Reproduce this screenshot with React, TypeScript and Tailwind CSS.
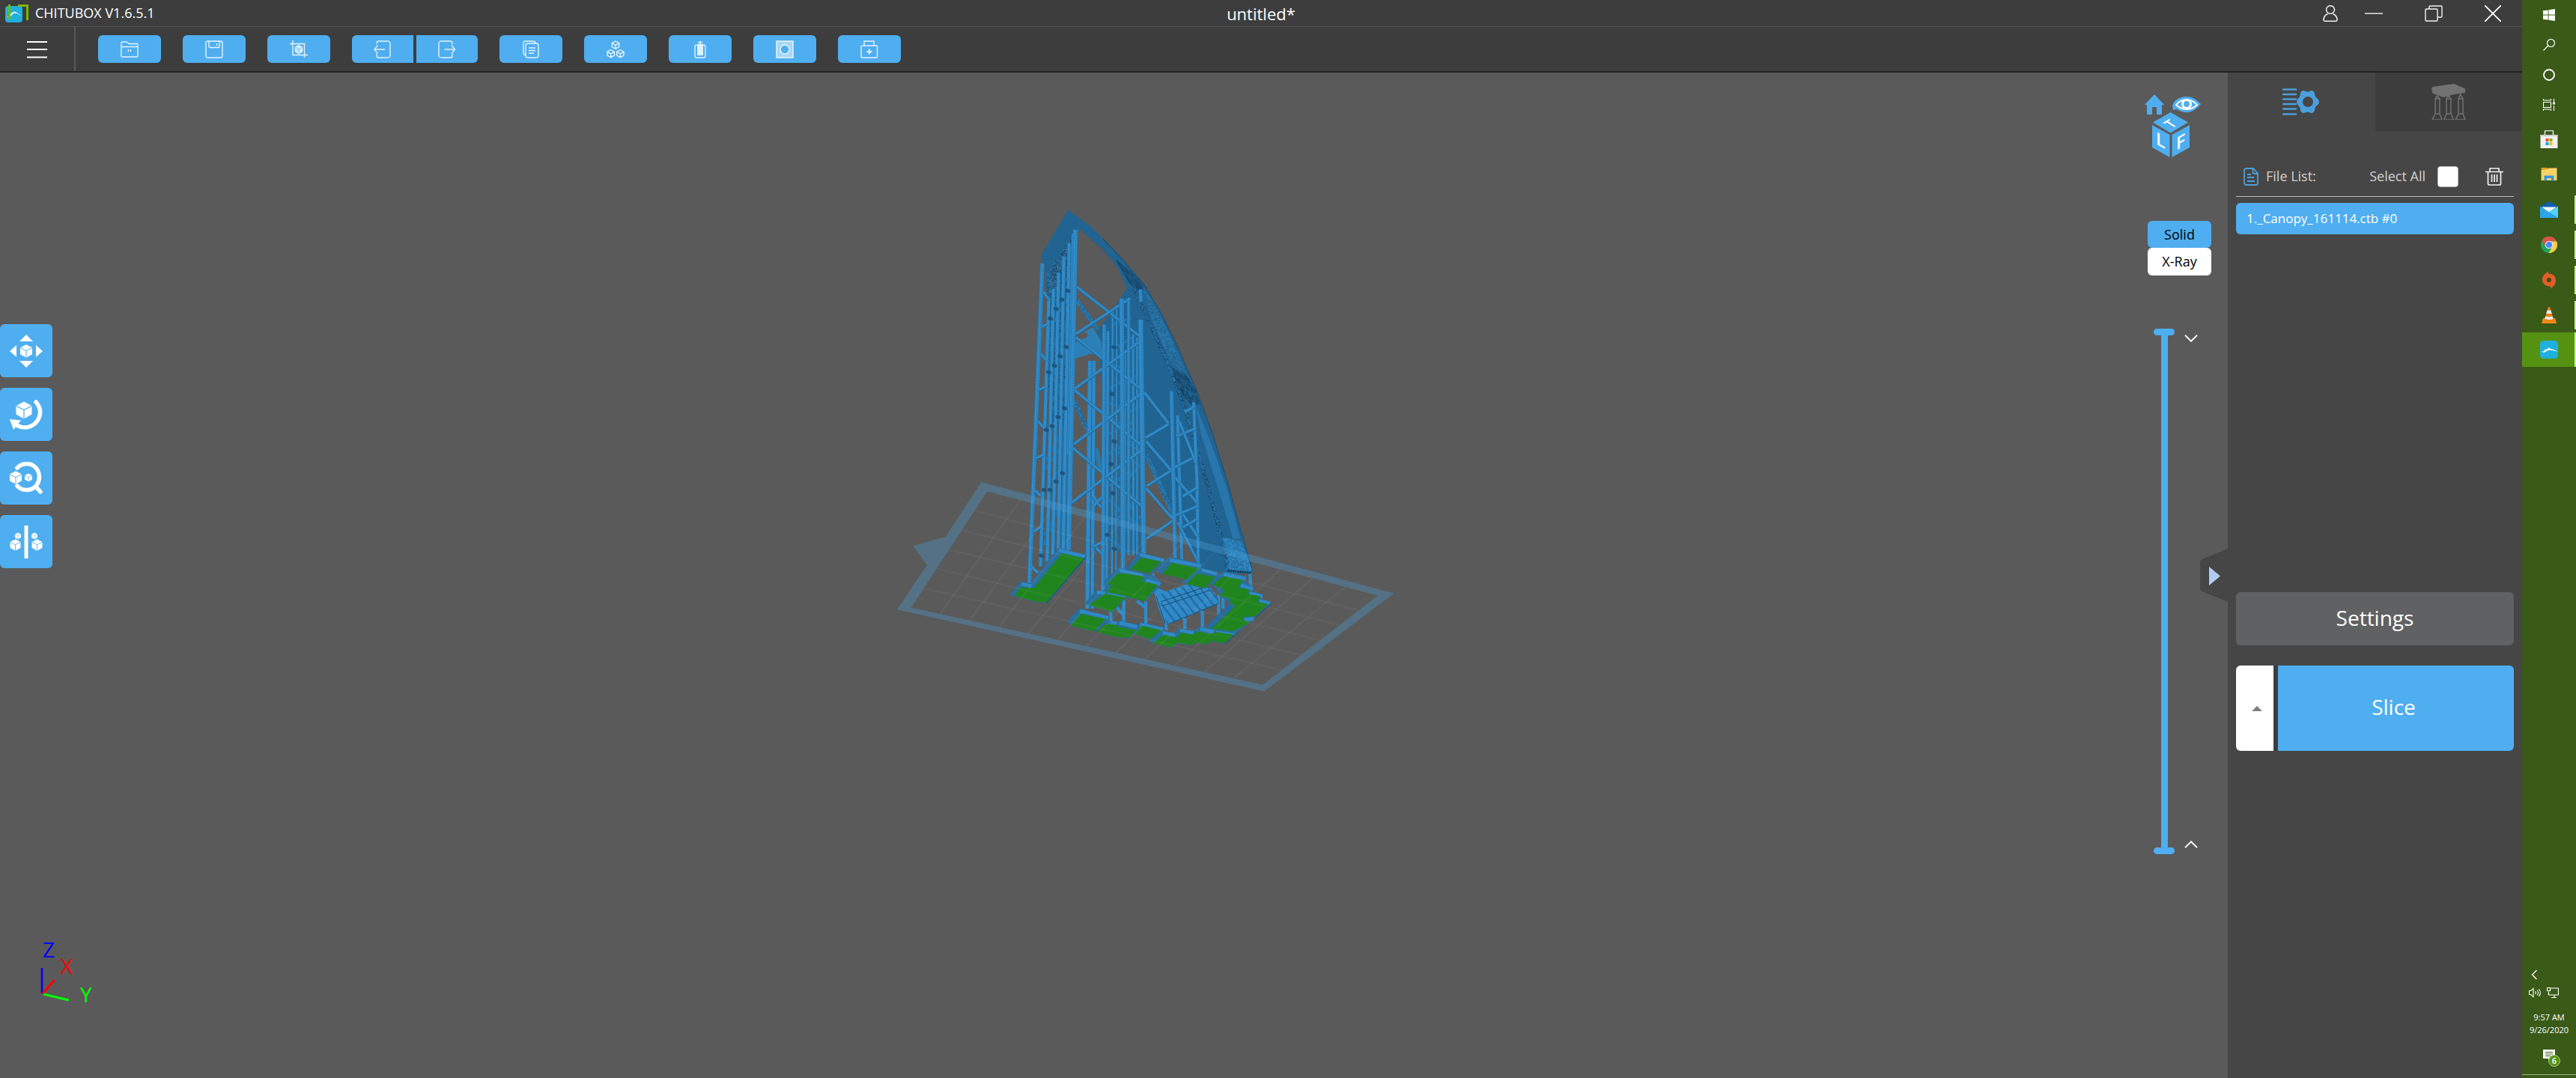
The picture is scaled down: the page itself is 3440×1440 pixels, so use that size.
import { FC, ReactNode } from "react";

/* ---------- toolbar icons ---------- */

const Line: FC<{ children: ReactNode }> = ({ children }) => (
  <svg className="w-6 h-6" viewBox="0 0 24 24" fill="none" stroke="#ffffff" strokeOpacity="0.85" strokeWidth="1.4">
    {children}
  </svg>
);

const FolderIcon = () => (
  <Line>
    <path d="M1 20.5V3.5c0-1 .6-1.5 1.5-1.5H8l3 2.5h10.5c1 0 1.5.6 1.5 1.5v14.5c0 1-.6 1.500-1.500 1.500h-19c-1 0-1.500-.6-1.500-1.500zM1 8.500h22M10.500 12v3M13.500 12v3" />
  </Line>
);
const SaveIcon = () => (
  <Line>
    <rect x="1" y="1" width="22" height="22" rx="2.5" />
    <path d="M5 1v7c0 1 .6 1.5 1.5 1.5h11c1 0 1.5-.6 1.5-1.5V1M15.5 4v3" />
  </Line>
);
const ScreenshotIcon = () => (
  <Line>
    <path d="M4 0v19.500h20M0 4.500h19.500V23" />
    <path d="M12 6.500l4.500 2.700v5.600L12 17.500l-4.500-2.700V9.200z" fill="#fff" fillOpacity="0.7" />
    <path d="M7.500 9.200L12 12l4.500-2.800M12 12v5" stroke="#4faeef" strokeWidth="0.7" />
  </Line>
);
const ImportIcon = () => (
  <Line>
    <path d="M4 5V3.500C4 2 5 1 6.500 1h12C20.500 1 22 2.500 22 4v16c0 1.500-1.500 3-3.500 3h-12C5 23 4 22 4 20.500V18M15 12H1M5.500 6.500L1 12l4.500 5.500" />
  </Line>
);
const ExportIcon = () => (
  <Line>
    <path d="M19 5V3.500C19 2 18 1 16.500 1h-12C2.500 1 1 2.500 1 4v16c0 1.500 1.500 3 3.500 3h12c1.500 0 2.500-1 2.500-2.500V18M8.500 12h14M18 6.500l4.500 5.500-4.500 5.500" />
  </Line>
);
const CopyIcon = () => (
  <Line>
    <rect x="5" y="4" width="17" height="19" rx="3" />
    <path d="M18 4c0-2-1-3-3-3H5C3 1 2 2 2 4v12c0 2 1 3.500 3 3.500M9 10h9M9 13.500h9M9 17h7" />
  </Line>
);
const Cube = ({ x, y }: { x: number; y: number }) => (
  <path
    transform={`translate(${x} ${y})`}
    d="M0-5l4.700 2.600v5L0 5.200l-4.700-2.600v-5zM-4.700-2.400L0 .4l4.700-2.800M0 .4v4.800"
  />
);
const ArrangeIcon = () => (
  <Line>
    <Cube x={12} y={6} />
    <Cube x={5.7} y={17.5} />
    <Cube x={18.3} y={17.5} />
  </Line>
);
const ResinIcon = () => (
  <Line>
    <path d="M12 5V1.500M9 3.500l3-2 3 2" />
    <rect x="5" y="6" width="14" height="17" rx="2.5" />
    <path d="M8 5.500h8V20H8z" fill="#fff" fillOpacity="0.8" stroke="none" />
  </Line>
);
const HollowIcon = () => (
  <Line>
    <path
      d="M1 1h22v22H1zM12 6a6 6 0 1 0 0 12 6 6 0 1 0 0-12z"
      fill="#fff"
      fillOpacity="0.5"
      fillRule="evenodd"
    />
  </Line>
);
const HoleIcon = () => (
  <Line>
    <path d="M5 6.500V1h13v5.500" />
    <rect x="1" y="7" width="21.5" height="16" rx="1.5" />
    <path d="M12 11.500v7M8.500 15h7" strokeWidth="2" />
  </Line>
);

const toolClass = "h-[37px] w-[84px] rounded-md bg-[#4faeef] flex items-center justify-center";

const tools = [
  { name: "Open", icon: <FolderIcon /> },
  { name: "Save", icon: <SaveIcon /> },
  { name: "Screenshot", icon: <ScreenshotIcon /> },
];
const moreTools = [
  { name: "Copy", icon: <CopyIcon /> },
  { name: "Auto layout", icon: <ArrangeIcon /> },
  { name: "Resin", icon: <ResinIcon /> },
  { name: "Hollow", icon: <HollowIcon /> },
  { name: "Dig hole", icon: <HoleIcon /> },
];

/* ---------- left hand tools ---------- */

const SolidCube = ({ x, y, r }: { x: number; y: number; r: number }) => (
  <g transform={`translate(${x} ${y}) scale(${r / 10})`}>
    <path d="M0-11l10 5.200v11L0 11l-10-5.800v-11z" fill="#fff" />
    <path d="M-10-5.500L0-.5l10-5M0-.5V11" stroke="#4faeef" strokeWidth="1.2" fill="none" />
  </g>
);

const sideTools = [
  {
    name: "Move",
    icon: (
      <>
        <SolidCube x={22} y={22} r={8} />
        <path d="M22 0l9 9H13zM22 44l9-9H13zM0 22l9-8v16zM44 22l-9-8v16z" fill="#fff" />
      </>
    ),
  },
  {
    name: "Rotate",
    icon: (
      <>
        <SolidCube x={19} y={16} r={10.5} />
        <path d="M35 5c5 6 7.500 13 4 21-3 8-11 13-19 13-4 0-8-1.500-11-3" fill="none" stroke="#fff" strokeWidth="5.5" strokeLinecap="round" />
        <path d="M0 28l15 1.500L5 42z" fill="#fff" />
      </>
    ),
  },
  {
    name: "Scale",
    icon: (
      <>
        <path d="M10 8C17 1 27 1 33 6c8 7 8 18 3 25-6 8-19 9-26 1M35 33l6 7" fill="none" stroke="#fff" strokeWidth="5.5" strokeLinecap="round" />
        <path d="M0 15h17v13H0z" fill="#4faeef" />
        <SolidCube x={8} y={21} r={8} />
        <SolidCube x={25} y={21} r={5} />
      </>
    ),
  },
  {
    name: "Mirror",
    icon: (
      <>
        <path d="M19.500 0h5v44h-5z" fill="#fff" />
        <SolidCube x={11} y={14} r={4} />
        <SolidCube x={33} y={14} r={4} />
        <SolidCube x={7.5} y={26} r={7} />
        <SolidCube x={36.5} y={26} r={7} />
      </>
    ),
  },
];

/* ---------- 3d scene ---------- */

// small seeded generator, keeps the surface grain stable between renders
const grain = (() => {
  let s = 7;
  const next = () => (s = (s * 16807) % 2147483647) / 2147483647;
  return Array.from({ length: 420 }, () => ({
    x: Math.floor(next() * 45) * 2,
    y: Math.floor(next() * 45) * 2,
  }));
})();

const lerp = (a: number[], b: number[], t: number) => [a[0] + (b[0] - a[0]) * t, a[1] + (b[1] - a[1]) * t];
const TL = [310, 914], TR = [1478, 1235], BR = [1134, 1510], BL = [82, 1272];
const gridLines = [
  ...Array.from({ length: 11 }, (_, i) => [lerp(TL, TR, (i + 1) / 12), lerp(BL, BR, (i + 1) / 12)]),
  ...Array.from({ length: 5 }, (_, i) => [lerp(TL, BL, (i + 1) / 6), lerp(TR, BR, (i + 1) / 6)]),
];

// x1, y1, x2, y2, width
const backPosts = [
  [618, 512, 610, 1275, 14], [630, 512, 625, 1275, 12],
  [672, 420, 668, 1200, 10], [686, 360, 684, 1170, 8], [698, 340, 696, 1160, 7],
  [747, 430, 748, 1110, 9], [759, 440, 759, 1110, 8], [724, 480, 723, 1110, 6],
  [495, 320, 470, 1145, 12], [509, 290, 490, 1130, 12], [524, 240, 507, 1110, 12],
  [540, 190, 523, 1100, 12], [556, 150, 538, 1095, 12], [566, 120, 552, 800, 8],
  [880, 680, 893, 1125, 11], [928, 640, 938, 880, 11], [938, 870, 942, 1140, 11],
];
const frontPosts = [
  [475, 212, 436, 1195, 13], [574, 108, 553, 1095, 15],
  [660, 400, 656, 1220, 12], [712, 320, 716, 1170, 14], [733, 325, 733, 1110, 10],
  [769, 385, 778, 1110, 15], [768, 292, 770, 330, 12], [861, 605, 872, 1120, 12],
];
const braces = [
  [578, 285, 770, 440], [575, 430, 738, 320], [575, 440, 775, 605], [570, 600, 770, 450],
  [568, 600, 778, 780], [568, 770, 775, 610], [565, 780, 778, 965], [562, 950, 775, 785],
  [780, 610, 852, 705], [783, 750, 852, 708], [785, 760, 860, 850], [787, 898, 858, 852],
  [785, 905, 865, 1000], [787, 1060, 865, 1005], [862, 845, 925, 812], [870, 870, 938, 950],
  [875, 745, 935, 720], [885, 700, 935, 830], [895, 930, 935, 905], [895, 985, 940, 1055],
  [870, 990, 940, 960], [880, 1010, 940, 1130], [900, 670, 928, 655], [895, 1025, 938, 1000],
  [478, 300, 495, 325], [473, 408, 492, 398], [468, 490, 488, 512], [462, 603, 485, 592],
  [456, 692, 485, 725], [450, 815, 478, 802], [447, 905, 470, 930], [444, 1040, 470, 1025],
  [438, 1140, 462, 1167], [628, 930, 650, 965], [628, 960, 655, 930], [628, 1080, 655, 1110],
  [628, 1085, 655, 1070],
];
const webs = [
  [505, 400, 560, 300], [500, 480, 560, 380], [505, 560, 560, 430], [500, 640, 560, 560],
  [500, 720, 560, 640], [480, 850, 555, 740], [480, 1080, 550, 880], [490, 900, 550, 810],
  [480, 1050, 520, 980], [485, 820, 550, 700],
  [670, 600, 740, 560], [665, 640, 730, 660], [670, 740, 745, 700], [670, 800, 740, 760],
  [670, 900, 740, 850], [670, 860, 740, 900], [675, 940, 750, 1010], [670, 1020, 745, 960],
  [675, 1060, 730, 1100], [690, 400, 740, 380], [680, 480, 745, 440], [680, 520, 740, 545],
  [725, 580, 765, 550], [725, 880, 770, 830], [725, 1040, 770, 990], [680, 690, 750, 730],
  [680, 780, 760, 830], [690, 980, 765, 940], [720, 680, 770, 650], [720, 760, 770, 790],
];
const joints = [
  [551, 296], [533, 323], [516, 352], [499, 382], [546, 469], [528, 498], [511, 527], [494, 547],
  [541, 658], [522, 685], [504, 713], [487, 725], [535, 858], [516, 884], [498, 910], [480, 910],
  [472, 1112], [690, 470], [683, 614], [690, 760], [680, 830], [686, 920], [670, 1048], [690, 1090],
];

const rims = [
  "25,285 70,230 110,238 220,95 335,125 330,138 175,318 120,310 45,290",
  "490,180 545,112 652,140 640,155 595,197 545,190",
  "610,190 665,132 797,160 795,178 860,195 865,210 808,258 733,240 705,230 735,222 635,200",
  "405,275 405,225 460,175 600,205 635,240 570,310 480,292",
  "325,320 372,265 415,275 495,292 438,354 342,325",
  "257,390 303,338 425,370 420,385 370,432 270,408",
  "375,432 418,385 458,395 462,385 540,405 530,430 502,459 440,452",
  "522,440 545,393 645,415 635,430 590,464",
  "580,468 635,427 685,437 705,417 765,428 785,410 850,425 945,430 925,445 887,480 830,470 815,484 768,476 747,487 697,478 672,497 600,477",
  "830,240 880,190 975,210 970,232 1005,255 1000,270 1043,285 1032,302 1075,318 1012,372 1005,378 985,397 930,437 830,422 812,410 905,322 900,310 865,288 855,262",
];
const greens = [
  "45,288 68,253 120,258 235,118 325,138 170,316 120,308",
  "508,180 552,135 632,150 585,197",
  "635,200 675,155 782,178 735,222",
  "733,240 775,198 850,213 805,257",
  "415,272 432,245 415,240 455,200 480,197 565,210 553,228 617,243 565,308 480,288",
  "342,325 410,277 490,293 435,352",
  "270,405 310,360 408,380 365,430 288,412",
  "375,432 410,400 458,405 455,412 530,425 502,457 440,451",
  "525,440 555,407 632,425 590,462",
  "600,477 640,443 692,455 712,435 757,443 780,430 835,442 850,430 925,440 885,478 830,468 815,483 768,475 747,485 697,475 670,495",
  "837,242 880,210 960,225 940,255 985,262 980,280 1030,290 1018,312 1060,320 1010,370 965,372 960,382 985,397 920,430 832,420 927,330 905,310 910,300 865,288 885,265",
];

const Model = () => (
  <svg
    className="absolute left-[1180px] top-[163px] w-[700px] h-[680px]"
    viewBox="0 0 1568 1568"
    preserveAspectRatio="none"
    aria-label="Model on build plate"
  >
    <defs>
      <pattern id="grain" width="90" height="90" patternUnits="userSpaceOnUse">
        {grain.map((g, i) => (
          <rect key={i} x={g.x} y={g.y} width="2.5" height="2.5" fill="#123a57" />
        ))}
      </pattern>
      <pattern id="hatch" width="6" height="6" patternUnits="userSpaceOnUse" patternTransform="rotate(25)">
        <path d="M0 3h6" stroke="#1d5a85" strokeWidth="1.5" />
      </pattern>
      <pattern id="wave" width="27" height="40" patternUnits="userSpaceOnUse" patternTransform="rotate(-38)">
        <path d="M4 0v40" stroke="#226a9c" strokeWidth="7" />
      </pattern>
    </defs>

    {/* canopy shell */}
    <g>
      <path
        d="M552 47L620 98 700 182 778 275 830 365 880 470 935 600 985 740 1030 890 1070 1040 1104 1160 1098 1168 1015 1165 948 1150 865 975 785 800 780 700 655 620 640 420 690 350 728 287 700 225 660 170 588 107 575 112 500 235 495 310 485 290 484 215 475 212 472 185z"
        fill="#226796"
      />
      <path
        d="M552 47L620 98 700 182 778 275 830 365 880 470 935 600 985 740 1030 890 1070 1040 1104 1160 1015 1165 948 1150 785 800 780 700 655 620 640 420 728 287 700 225 588 107 500 235 485 290 472 185z"
        fill="url(#hatch)"
      />
      <path d="M655 620h125v170l-10 310H665z" fill="#226796" fillOpacity="0.65" />
      <path d="M776 292L800 320 850 420 905 548 880 545 850 500 800 380z" fill="#2876ab" />
      <path d="M932 645L985 780 1025 900 1068 1060 1045 1060 1008 930 950 740z" fill="#2876ab" />
      <path d="M1012 1055L1072 1068 1104 1160 1030 1158z" fill="#2d86c2" />
      <path d="M690 195L735 232 778 275 772 295 745 285 728 262z" fill="#1d5a85" />
      <path d="M855 528L905 555 935 605 945 640 925 650 895 620z" fill="#1f608d" />
      <g fill="url(#grain)">
        <path d="M690 195L735 232 778 275 772 295 745 285 728 262z" />
        <path d="M690 195L735 232 778 275 772 295 745 285 728 262z" transform="translate(3 5)" />
        <path d="M855 528L905 555 935 605 945 640 925 650 895 620z" />
        <path d="M855 528L905 555 935 605 945 640 925 650 895 620z" transform="translate(3 4)" />
        <path d="M1012 1055L1072 1068 1104 1160 1030 1158z" fillOpacity="0.5" />
        <path d="M776 292L800 320 850 420 905 548 880 545 850 500 800 380z" fillOpacity="0.5" />
      </g>
      <g fill="none">
        <path d="M748 290L785 370 850 520 890 625 925 740 965 880 1012 1060 1030 1155" stroke="#276fa3" strokeWidth="8" />
        <path d="M748 290L785 370 850 520 890 625 925 740 965 880 1012 1060 1030 1155" stroke="url(#grain)" strokeWidth="12" />
        <path d="M655 135L700 184 778 275 830 365 880 470 935 600 985 740 1030 890 1070 1040 1104 1160" stroke="#16486b" strokeWidth="3" strokeDasharray="4 3" />
        <path d="M1030 1158L1100 1165" stroke="#133d5a" strokeWidth="7" strokeDasharray="5 2" />
      </g>
    </g>

    {/* inner pieces behind the supports */}
    <g>
      <path d="M572 505V455L608 440 612 428 600 425 625 408 650 450 657 500 620 490z" fill="#2c80b8" />
      <path d="M578 325L640 415M570 635L614 735M785 800L868 990M635 782L650 850" stroke="#2a7ab0" strokeWidth="14" fill="none" />
      <path d="M578 325L640 415M570 635L614 735M785 800L868 990" stroke="url(#grain)" strokeWidth="14" strokeOpacity="0.6" fill="none" />
      <path d="M488 240L572 118V550L550 1090 530 1090 530 720 500 720 490 560z" fill="#2876ab" fillOpacity="0.8" />
      <path d="M488 240L572 118V450L548 720 500 720 490 560z" fill="url(#grain)" />
    </g>

    <g fill="none">
      {webs.map(([a, b, c, d], i) => (
        <path key={i} d={`M${a} ${b}L${c} ${d}`} stroke="#2877ac" strokeWidth="8" />
      ))}
      {backPosts.map(([a, b, c, d, w], i) => (
        <g key={i}>
          <path d={`M${a} ${b}L${c} ${d}`} stroke="#246a99" strokeWidth={w} />
          <path d={`M${a - 1} ${b}L${c - 1} ${d}`} stroke="#2f8ac8" strokeWidth={w - 3} />
        </g>
      ))}
      {braces.map(([a, b, c, d], i) => (
        <g key={i}>
          <path d={`M${a} ${b}L${c} ${d}`} stroke="#22658f" strokeWidth="10" />
          <path d={`M${a} ${b - 1}L${c} ${d - 1}`} stroke="#2f8ac8" strokeWidth="7" />
        </g>
      ))}
      {frontPosts.map(([a, b, c, d, w], i) => (
        <g key={i}>
          <path d={`M${a} ${b}L${c} ${d}`} stroke="#2877ac" strokeWidth={w} />
          <path d={`M${a} ${b}L${c} ${d}`} stroke="#2f8ccb" strokeWidth={w - 4} />
          <path d={`M${a + 2} ${b}L${c + 2} ${d}`} stroke="#22658f" strokeWidth="2" strokeDasharray="3 5" />
        </g>
      ))}
      {joints.map(([x, y], i) => (
        <ellipse key={i} cx={x} cy={y} rx="8" ry="6" fill="#1d567d" transform={`rotate(20 ${x} ${y})`} />
      ))}
    </g>

    {/* rafts */}
    <g transform="translate(358.4 1014.6) scale(.7467 .7687)">
      <g stroke="#2f8ac8" strokeWidth="13" fill="none">
        <path d="M570 310V400M535 308L568 335M482 305V392M455 335L480 365M430 350V388M715 375L727 385V420M788 345L797 355V415M862 285V362M880 295V340M988 200L990 250M652 395V425" />
      </g>
      <path d="M600 195l20 40h-45z" fill="#2f8ac8" />
      <path d="M600 262L615 255 650 270 740 240 770 250 830 255 860 300 862 318 655 403 645 400 622 340z" fill="#2f8ac8" />
      <path d="M635 275L740 240 830 255 860 300 862 318 655 403 630 330z" fill="url(#wave)" />
      <path d="M630 312L800 255M636 328L825 266M655 403L862 318M612 290L648 400" stroke="#1a5178" strokeWidth="3" fill="none" />
      {rims.map((p, i) => (
        <polygon key={i} points={p} fill="#286f9f" />
      ))}
      <g stroke="#2f89c5" strokeWidth="14" fill="none">
        <path d="M72 240L112 248M222 106L328 130M548 124L642 146M668 144L790 168M795 184L855 200M465 186L560 206M570 226L628 240M375 272L408 278M306 349L420 376M430 394L455 399M465 396L535 412M548 402L640 422M638 436L688 446M708 426L762 436M788 420L842 432M882 201L970 218M950 245L1000 260M985 277L1038 290M1025 307L1068 318M962 384L1002 380" />
      </g>
      {greens.map((p, i) => (
        <polygon key={i} points={p} fill="#21851f" />
      ))}
      <path d="M415 278L490 292M850 430L935 442" stroke="#2f89c5" strokeWidth="5" />
      <path d="M812 410L905 322 927 330 832 420z" fill="#266c9c" />
      <path d="M330 132L172 318M1072 318L1012 372M940 432L887 480" stroke="#1a5178" strokeWidth="3" />
    </g>

    {/* build plate, seen from below through the model */}
    <g fill="none" stroke="#ffffff" strokeOpacity="0.04" strokeWidth="6">
      {gridLines.map(([a, b], i) => (
        <path key={i} d={`M${a[0]} ${a[1]}L${b[0]} ${b[1]}`} />
      ))}
    </g>
    <path
      d="M292 885L1527 1228 1138 1530 40 1278 130 1140 88 1082 186 1053zM310 914L82 1272 1134 1510 1478 1235z"
      fill="#4a9fd6"
      fillOpacity="0.35"
      fillRule="evenodd"
    />
  </svg>
);

const Axes = () => (
  <svg className="absolute left-[50px] top-[1150px] w-[80px] h-[100px]" viewBox="0 0 80 100" aria-label="Axes">
    <path d="M6 80V46" stroke="#0000ff" strokeWidth="2.5" />
    <path d="M8 81l34 8" stroke="#00ff00" strokeWidth="3" />
    <path d="M7 80l16-18" stroke="#ff0000" strokeWidth="3" />
    <g fontFamily="Open Sans" fontSize="28">
      <text x="7" y="32" fill="#0000ff">Z</text>
      <text x="31" y="54" fill="#ff0000">X</text>
      <text x="57" y="92" fill="#00ff00">Y</text>
    </g>
  </svg>
);

const ViewCube = () => (
  <svg className="w-[76px] h-[86px]" viewBox="0 0 76 86">
    <g fill="#4faeef">
      <path d="M13 1l13 14h-3v13h-7V18h-6v10H3V15H0z" />
      <path d="M37 17C38 9 47 4 56 4c8 0 14 5 19 10-5 6-11 11-19 11-6 0-10-2-13-4l-5 1z" />
      <path d="M34.500 25L58 38.500 34.500 52.500 11 38.500zM10 42l23.500 13v30L10 72zM36.500 55L60 42v30L36.500 85z" />
    </g>
    <path d="M42 15c7-9 20-9 28 0-8 8-20 8-28 0z" fill="#4faeef" stroke="#fff" strokeWidth="1.8" />
    <circle cx="56" cy="14" r="5.5" fill="#4faeef" stroke="#fff" strokeWidth="3" />
    <g fontFamily="Open Sans" fontSize="23" fontWeight="600" fill="#fff">
      <text transform="translate(15 67) skewY(30)">L</text>
      <text transform="translate(42 76) skewY(-30)">F</text>
      <text transform="translate(36 47) rotate(-32) skewX(25)" fontSize="18">T</text>
    </g>
  </svg>
);

/* ---------- taskbar ---------- */

const taskSvg = "w-6 h-6";

const ChituIcon = () => (
  <svg className={taskSvg} viewBox="0 0 24 24">
    <rect width="24" height="24" rx="4.5" fill="#20b0dd" />
    <path d="M0 13c2 2 3 2 5 1l2-2.500 2 .5 3-3 .5 1.500C17 11 20 13 24 15c-4-1-7-2-10-2.500-3 .2-4 .5-6 2-2 1.800-5 2-8-1.500z" fill="#fff" />
  </svg>
);

const systemItems = [
  {
    name: "Start",
    icon: (
      <svg className="w-4 h-4" viewBox="0 0 16 16" fill="#fff">
        <path d="M0 2.300L6.700 1.400v6.200H0zM7.500 1.200L16 0v7.600H7.500zM0 8.400h6.700v6.200L0 13.700zM7.500 8.400H16V16l-8.500-1.200z" />
      </svg>
    ),
  },
  {
    name: "Search",
    icon: (
      <svg className="w-4 h-4" viewBox="0 0 16 16" fill="none" stroke="#fff" strokeWidth="1.2">
        <circle cx="10.5" cy="5.5" r="5" />
        <path d="M6.800 9L.5 15.500" />
      </svg>
    ),
  },
  {
    name: "Cortana",
    icon: (
      <svg className="w-4 h-4" viewBox="0 0 16 16" fill="none" stroke="#fff" strokeWidth="1.8">
        <circle cx="8" cy="8" r="7" />
      </svg>
    ),
  },
  {
    name: "Task View",
    icon: (
      <svg className="w-4 h-4" viewBox="0 0 16 16" fill="none" stroke="#fff" strokeWidth="1.1">
        <path d="M.5 4.500h10v7H.5zM.5 0v2h10V0M.5 16v-2h10v2M14.500 0v4M14.500 9v7" />
        <path d="M13 4.500h3v3h-3z" fill="#fff" stroke="none" />
      </svg>
    ),
  },
];

const apps = [
  {
    name: "Microsoft Store",
    icon: (
      <svg className={taskSvg} viewBox="0 0 24 24">
        <path d="M6.500 7V1.500c0-.6.400-1 1-1h9c.6 0 1 .4 1 1V7" fill="none" stroke="#ddd" strokeWidth="1.6" />
        <path d="M.5 6h23v18H.5z" fill="#f1f1f1" />
        <path d="M.5 6h23v2H.5z" fill="#cfcfcf" />
        <path d="M7.500 11h4v4h-4z" fill="#f25022" />
        <path d="M12.500 11h4v4h-4z" fill="#7fba00" />
        <path d="M7.500 16h4v4h-4z" fill="#00a4ef" />
        <path d="M12.500 16h4v4h-4z" fill="#ffb900" />
      </svg>
    ),
  },
  {
    name: "File Explorer",
    icon: (
      <svg className={taskSvg} viewBox="0 0 24 24">
        <path d="M1.500 3h8l1.500 2H1.500z" fill="#e8a20a" />
        <path d="M1.500 5.500L10 5l1.500-1.500h11V20h-21z" fill="#fdd367" />
        <path d="M5.500 20.500v-6c0-.6.4-1 1-1h11c.6 0 1 .4 1 1v6h-3.500V17H9v3.500z" fill="#3a94df" />
      </svg>
    ),
  },
  {
    name: "Mail",
    running: true,
    icon: (
      <svg className={taskSvg} viewBox="0 0 24 24">
        <path d="M0 8l12-7 12 7v15H0z" fill="#0a5fb4" />
        <path d="M0 8l12 7 12-7v15H0z" fill="#2aa6ea" />
        <path d="M2 8.500h20L12 15.500z" fill="#f2f2f4" />
        <path d="M24 8v15L12 15z" fill="#50d0fb" />
      </svg>
    ),
  },
  {
    name: "Chrome",
    running: true,
    icon: (
      <svg className={taskSvg} viewBox="0 0 24 24">
        <circle cx="12" cy="12" r="11" fill="#1da462" />
        <path d="M2.500 6.500A11 11 0 0 1 22 7.500H12L7 14z" fill="#dd5144" />
        <path d="M22 7.500A11 11 0 0 1 11.500 23l5-8.500L15 7.500z" fill="#ffcd46" />
        <circle cx="12" cy="12" r="5.3" fill="#f1f1f1" />
        <circle cx="12" cy="12" r="4.3" fill="#4c8bf5" />
      </svg>
    ),
  },
  {
    name: "Origin",
    running: true,
    icon: (
      <svg className={taskSvg} viewBox="0 0 24 24">
        <path d="M12 0c-1 1.500-1 2-1 3.500 6-.6 10 4 10 9 0 5-3 8-7.500 11.500.7-1.500.7-2.300.5-3.500C7 21 3 16.500 3 11.500 3 6 7 3 12 0z" fill="#e45c2b" />
        <circle cx="12" cy="12" r="3" fill="#3c4d12" />
      </svg>
    ),
  },
  {
    name: "VLC",
    running: true,
    icon: (
      <svg className={taskSvg} viewBox="0 0 24 24">
        <path d="M4 16h16l2 7H2z" fill="#f28a12" />
        <path d="M11 1h2l5 17c-3 2-9 2-12 0z" fill="#f07c0d" />
        <path d="M9.500 5.500h5l1.300 4.500H8.200zM7.200 13.500c3 1 6.500 1 9.600 0l1 3.500c-3 1.600-8.600 1.600-11.600 0z" fill="#e9e9e9" />
      </svg>
    ),
  },
];

const Taskbar: FC = () => (
  <nav aria-label="Taskbar" className="w-[72px] shrink-0 bg-[#3a5a18] flex flex-col text-white">
    {systemItems.map((s) => (
      <button key={s.name} aria-label={s.name} className="h-10 flex items-center justify-center">
        {s.icon}
      </button>
    ))}
    <div className="mt-0.5">
      {apps.map((a) => (
        <button key={a.name} aria-label={a.name} className="w-full h-[47px] flex items-center">
          <span className="flex-1 flex justify-center pl-0.5">{a.icon}</span>
          <span className={a.running ? "w-0.5 h-[38px] bg-[#c9f58a]" : "w-0.5 h-[38px]"}></span>
        </button>
      ))}
      <button aria-label="CHITUBOX" className="w-full h-[46px] flex items-center bg-[#559211]">
        <span className="flex-1 flex justify-center pl-0.5"><ChituIcon /></span>
        <span className="w-0.5 h-full bg-[#c9f58a]"></span>
      </button>
    </div>
    <div className="mt-auto flex flex-col">
      <button aria-label="Show hidden icons" className="pl-3 h-6 flex items-center">
        <svg className="w-2 h-[14px]" viewBox="0 0 8 14" fill="none" stroke="#fff" strokeWidth="1.4">
          <path d="M7.500 1L1.500 7l6 6" />
        </svg>
      </button>
      <div className="h-6 flex items-center justify-center gap-2 pr-[14px]">
        <svg className="w-4 h-4" viewBox="0 0 16 16" fill="none" stroke="#fff" strokeWidth="1.1">
          <path d="M.5 5.500h2l3.500-3v11l-3.500-3h-2zM8.500 6c1 1.300 1 2.700 0 4M11 4.500c2 2.300 2 4.700 0 7M13.500 3c2.600 3.500 2.600 6.500 0 10" />
        </svg>
        <svg className="w-4 h-4" viewBox="0 0 16 16" fill="none" stroke="#fff" strokeWidth="1.2">
          <path d="M4.500 2h11v9h-11M2.500 6.500V11h2M.5 1.500h4v4h-4zM10 11v3M6 14.500h7" />
        </svg>
      </div>
      <div className="pt-3 text-[11px] leading-[17px] text-center">
        <div>9:57 AM</div>
        <div>9/26/2020</div>
      </div>
      <button aria-label="Notifications" className="mt-[18px] h-[30px] relative flex justify-center">
        <svg className="w-4 h-4" viewBox="0 0 16 16">
          <path d="M0 0h16v12h-6l-3 3.500V12H0z" fill="#fff" />
          <path d="M3 3.500h10M3 6h10M3 8.500h7" stroke="#3a5a18" strokeWidth="1.2" />
        </svg>
        <span className="absolute left-[35px] top-[7px] w-4 h-4 rounded-full bg-[#559211] border border-[#a9c883] text-[11px] leading-[14px] text-center font-semibold">
          6
        </span>
      </button>
      <div className="mt-[3px] h-[5px] border-t border-[#9fb487]"></div>
    </div>
  </nav>
);

/* ---------- right panel ---------- */

const SettingsPanel: FC = () => (
  <aside className="relative w-[393px] shrink-0 bg-[#464646]">
    <button aria-label="Collapse panel" className="absolute -left-[37px] top-[636px]">
      <svg className="w-[37px] h-[71px]" viewBox="0 0 37 71">
        <path d="M37 0L3 14q-3 1.500-3 5v33q0 3.500 3 5l34 14z" fill="#464646" />
        <path d="M12 24l15 12.500L12 49z" fill="#b2cdf2" />
      </svg>
    </button>
    <div className="flex h-[78px]">
      <button aria-label="Settings list" className="flex-1 flex items-center justify-center">
        <svg className="w-[50px] h-[36px]" viewBox="0 0 50 36">
          <path d="M1 1.500h17M1 8h17M1 14.500h17M1 21h17M1 27.500h17M1 34.500h17" stroke="#4a9fda" strokeWidth="2.5" strokeLinecap="round" />
          <path
            d="M29 3c3 2 6 2 9 0 4 0 5 2 5.500 7 1 3 5.500 4 5.500 8s-4.500 5-5.500 8c-.5 5-1.500 7-5.500 7-3-2-6-2-9 0-4 0-5-2-5.500-7-1-3-4.500-4-4.500-8s3.500-5 4.500-8C24 5 25 3 29 3zM34 11a7 7 0 1 0 0 14 7 7 0 1 0 0-14z"
            fill="#4a9fda"
            fillRule="evenodd"
          />
        </svg>
      </button>
      <button aria-label="Supports" className="flex-1 flex items-center justify-center bg-[#3d3d3d]">
        <svg className="w-[46px] h-[48px]" viewBox="0 0 46 48">
          <path d="M1 4L30 0l14 6q2 1 1 6l-14 2-15 4L2 13Q-1 8 1 4z" fill="#727272" />
          <g fill="none" stroke="#727272" strokeWidth="1.5">
            <path d="M7.500 16L5 20v20l-4 8h13l-3-8V20zM5 20h6M5 40h6M23 16l-3 4v20l-3.500 8h13L26 40V20zM20 20h6M20 40h6M38.500 14L36 20v20l-4 8h13l-3-8V20zM36 20h6M36 40h6" />
          </g>
        </svg>
      </button>
    </div>
    <div className="px-[11px]">
      <section className="min-h-[616px] pt-[42px]">
        <div className="flex items-center h-[46px] pb-2 pl-[10px] pr-[14px] text-[18px] text-[#d2d2d2] border-b border-[#bdbdbd]">
          <svg className="w-5 h-6" viewBox="0 0 20 24" fill="none" stroke="#4a9fda" strokeWidth="1.8">
            <path d="M3.500 1H13l6 6.500v13c0 1.500-1 2.500-2.500 2.500h-13C2 23 1 22 1 20.500v-17C1 2 2 1 3.500 1zM12.500 1v4.500c0 1.500.5 2.500 2 2.500H19M5 9h5M5 13h9M5 18h10" />
          </svg>
          <span className="ml-[10px]">File List:</span>
          <label htmlFor="all" className="ml-auto">Select All</label>
          <input
            id="all"
            type="checkbox"
            className="ml-4 w-7 h-7 appearance-none rounded bg-white border border-[#bdbdbd]"
          />
          <button aria-label="Delete" className="ml-9">
            <svg className="w-6 h-6" viewBox="0 0 24 24" fill="none" stroke="#f2f2f2" strokeWidth="1.7">
              <path d="M0 5.500h24M6 5V1h12v4M3.500 6v15c0 1.500.5 2 2 2h13c1.500 0 2-.5 2-2V6M8.500 9v10M12 9v10M15.500 9v10" />
            </svg>
          </button>
        </div>
        <ul className="mt-2">
          <li className="h-[42px] px-[14px] flex items-center rounded-md bg-[#4faeef] text-white text-[17px]">
            1._Canopy_161114.ctb #0
          </li>
        </ul>
      </section>
      <button className="block w-full h-[71px] pb-1 rounded-md bg-[#606162] text-white text-[28px]">Settings</button>
      <div className="mt-[27px] h-[114px] flex gap-[6px] bg-[#3d3d3d] rounded-md overflow-hidden">
        <button aria-label="Slice options" className="w-[50px] bg-white flex items-center justify-center pl-[6px]">
          <svg className="w-[14px] h-[7px]" viewBox="0 0 14 7">
            <path d="M0 7l7-7 7 7z" fill="#808080" />
          </svg>
        </button>
        <button className="flex-1 pb-1 pr-1.5 bg-[#4faeef] text-white text-[28px]">Slice</button>
      </div>
    </div>
  </aside>
);

const rangeClass =
  "absolute inset-0 w-7 h-full m-0 appearance-none bg-transparent [writing-mode:vertical-lr] [direction:rtl] [&::-webkit-slider-thumb]:appearance-none [&::-webkit-slider-thumb]:w-7 [&::-webkit-slider-thumb]:h-[9px] [&::-webkit-slider-thumb]:rounded-full [&::-webkit-slider-thumb]:bg-[#4faeef]";

const ViewControls: FC = () => (
  <div className="absolute right-[22px] top-[28px] w-[89px] flex flex-col">
    <button aria-label="View orientation" className="w-[76px]"><ViewCube /></button>
    <div className="mt-[84px] ml-1 flex flex-col text-[18px] text-black">
      <button className="h-[36px] rounded-md bg-[#4faeef]">Solid</button>
      <button className="h-[37px] rounded-md bg-white">X-Ray</button>
    </div>
    <div className="mt-[71px] ml-3 h-[702px] flex justify-between">
      <div className="relative w-7 flex justify-center">
        <div className="w-[9px] bg-[#4faeef]"></div>
        <input type="range" aria-label="Top layer" defaultValue={100} className={rangeClass} />
        <input type="range" aria-label="Bottom layer" defaultValue={0} className={rangeClass} />
      </div>
      <div className="w-9 flex flex-col justify-between py-2">
        <button aria-label="Layer down">
          <svg className="w-[18px] h-[10px]" viewBox="0 0 18 10" fill="none" stroke="#f2f2f2" strokeWidth="2">
            <path d="M1 .8l8 8 8-8" />
          </svg>
        </button>
        <button aria-label="Layer up">
          <svg className="w-[18px] h-[10px]" viewBox="0 0 18 10" fill="none" stroke="#f2f2f2" strokeWidth="2">
            <path d="M1 9.200l8-8 8 8" />
          </svg>
        </button>
      </div>
    </div>
  </div>
);

export default function App() {
  return (
    <div className="flex min-h-screen bg-[#5a5a5a] font-['Open_Sans','Noto_Sans',sans-serif]">
      <div className="flex-1 min-w-0 flex flex-col">
        <header className="bg-[#3d3d3d] text-white">
          <div className="h-[36px] grid grid-cols-3 items-center border-b border-[#555555]">
            <div className="flex items-center gap-2 pl-[7px] text-[18px]">
              <svg className="w-8 h-6" viewBox="0 0 32 24">
                <rect x="0" y="2" width="23" height="22" rx="4" fill="#20b0dd" />
                <path d="M0 14c2 3 4 3 6 0l3-3 3-1.500c4 1 7 4 10 6-4-2-6-4-9-4-4 0-4 4-7 5-3 .5-5-.5-6-2.500z" fill="#fff" />
                <path d="M5.500 0v20M17 1.500h12.500V21" fill="none" stroke="#7ab800" strokeWidth="3" />
              </svg>
              <span>CHITUBOX V1.6.5.1</span>
            </div>
            <div className="text-[22px] leading-8 text-center">untitled*</div>
            <div className="flex items-center justify-end gap-14 pr-7">
              <div className="flex items-center gap-9">
                <button aria-label="Account">
                  <svg className="w-5 h-[22px]" viewBox="0 0 20 22" fill="none" stroke="#f2f2f2" strokeWidth="1.5">
                    <ellipse cx="10" cy="6" rx="5.5" ry="5.3" />
                    <path d="M6.500 11.500C3 13 1 16 1 19.500c0 1.200.5 1.700 1.500 1.700h15c1 0 1.500-.5 1.500-1.700 0-3.500-2-6.500-5.500-8" />
                  </svg>
                </button>
                <button aria-label="Minimize" className="h-6 flex items-center">
                  <span className="block w-6 h-0.5 bg-[#bdbdbd]"></span>
                </button>
              </div>
              <button aria-label="Restore">
                <svg className="w-6 h-[22px]" viewBox="0 0 24 22" fill="none" stroke="#f2f2f2" strokeWidth="1.4">
                  <rect x="1" y="5" width="16" height="16" rx="1" />
                  <path d="M6 5V2c0-.7.300-1 1-1h15c.7 0 1 .3 1 1v13c0 .7-.3 1-1 1h-5" />
                </svg>
              </button>
              <button aria-label="Close">
                <svg className="w-[22px] h-[22px]" viewBox="0 0 22 22" stroke="#ffffff" strokeWidth="1.8">
                  <path d="M0 0l22 22M22 0L0 22" />
                </svg>
              </button>
            </div>
          </div>
          <div className="h-[61px] flex items-center border-b-2 border-[#232323]">
            <div className="w-[101px] self-stretch flex items-center justify-center border-r-2 border-[#585858]">
              <button aria-label="Menu">
                <svg className="w-[27px] h-6" viewBox="0 0 27 24" stroke="#fff" strokeWidth="2">
                  <path d="M0 2h27M0 12h27M0 22.500h27" />
                </svg>
              </button>
            </div>
            <div className="ml-[30px] flex gap-[29px]">
              {tools.map((t) => (
                <button key={t.name} aria-label={t.name} className={toolClass}>{t.icon}</button>
              ))}
              <div className="flex gap-1">
                <button aria-label="Undo" className="h-[37px] w-[82px] rounded-l-md bg-[#4faeef] flex items-center justify-center">
                  <ImportIcon />
                </button>
                <button aria-label="Redo" className="h-[37px] w-[82px] rounded-r-md bg-[#4faeef] flex items-center justify-center">
                  <ExportIcon />
                </button>
              </div>
              {moreTools.map((t) => (
                <button key={t.name} aria-label={t.name} className={toolClass}>{t.icon}</button>
              ))}
            </div>
          </div>
        </header>
        <div className="flex-1 flex">
          <main className="relative flex-1 overflow-hidden">
            <Model />
            <Axes />
            <div className="absolute left-0 top-[336px] flex flex-col gap-[14px]">
              {sideTools.map((t) => (
                <button
                  key={t.name}
                  aria-label={t.name}
                  className="w-[70px] h-[71px] rounded-md bg-[#4faeef] flex items-center justify-center"
                >
                  <svg className="w-11 h-11" viewBox="0 0 44 44">{t.icon}</svg>
                </button>
              ))}
            </div>
            <ViewControls />
          </main>
          <SettingsPanel />
        </div>
      </div>
      <Taskbar />
    </div>
  );
}
